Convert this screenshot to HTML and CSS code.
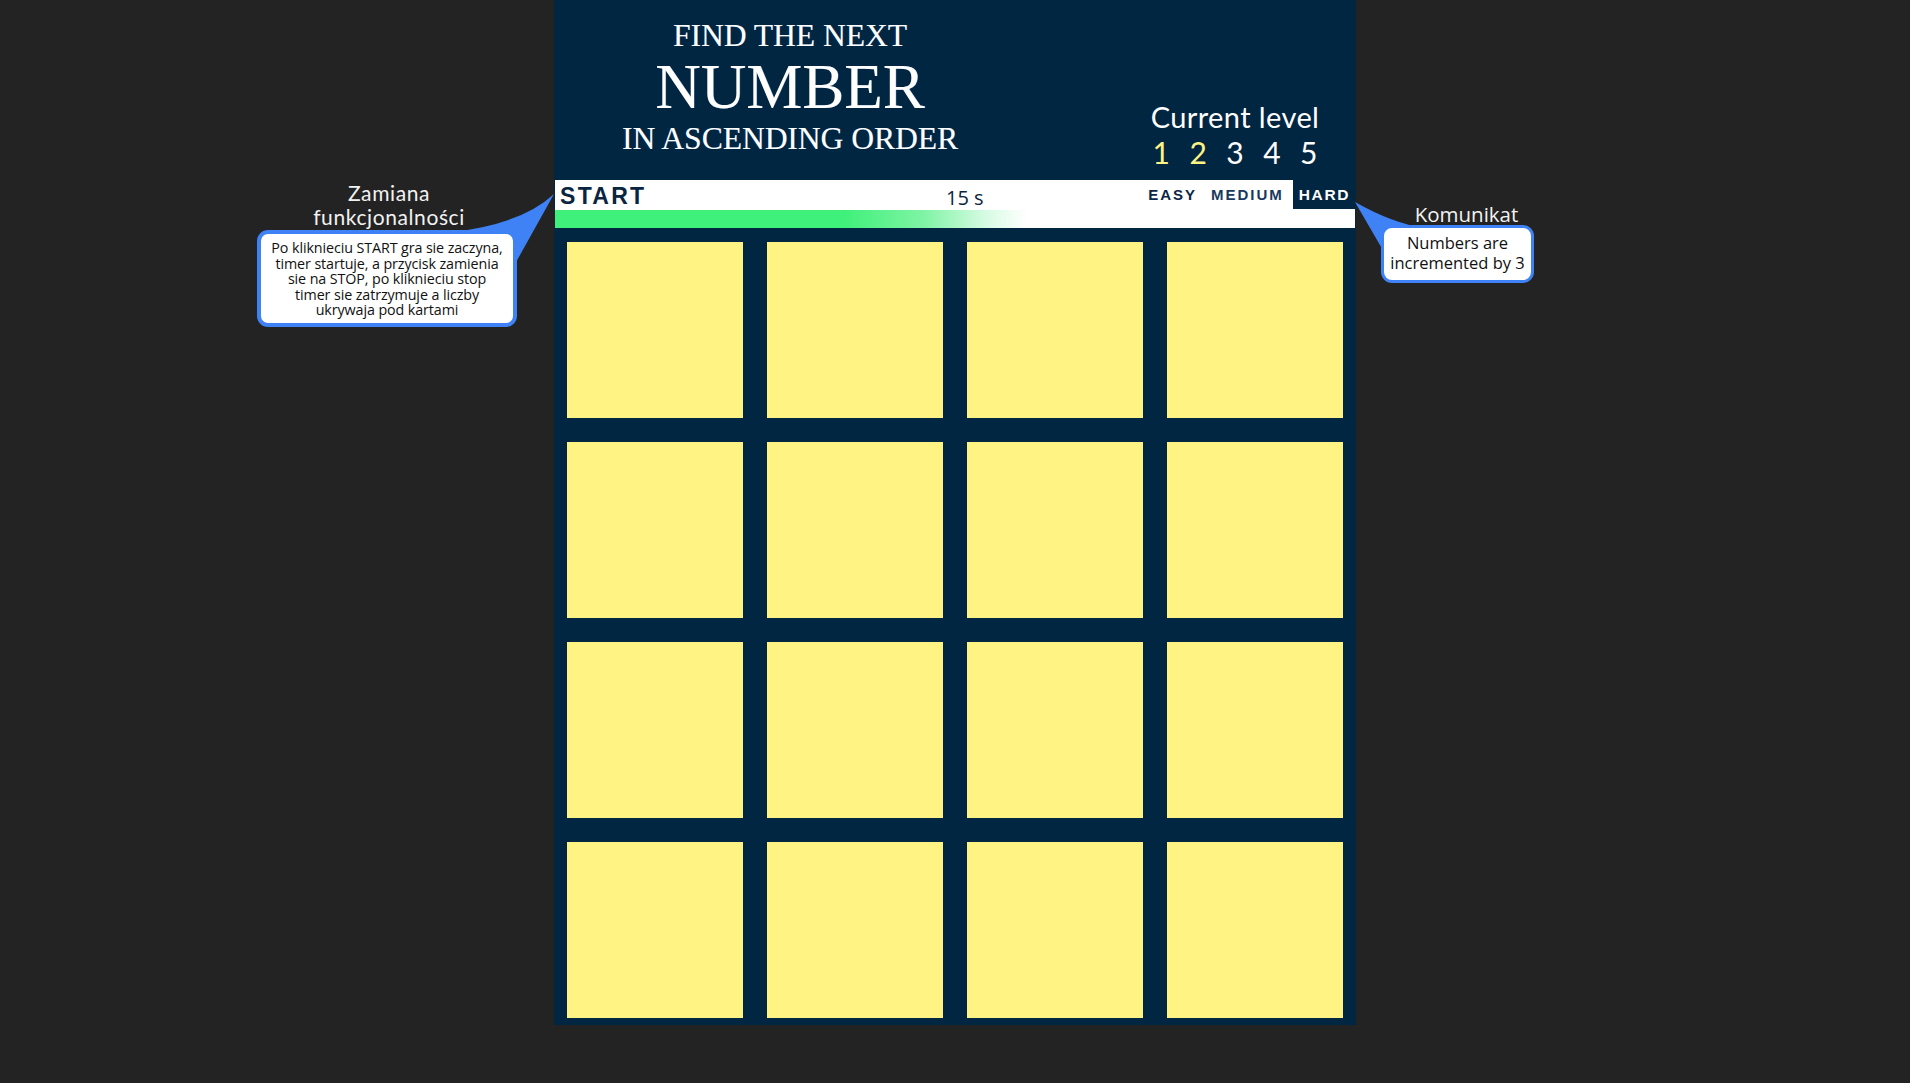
FILE: index.html
```html
<!DOCTYPE html>
<html lang="en">
<head>
<meta charset="utf-8">
<title>Find the next number</title>
<link rel="stylesheet" href="styles.css">
</head>
<body>
<div class="page">
  <main class="board">
    <header class="board-head">
      <div class="title">
        <div class="title-sm">FIND THE NEXT</div>
        <div class="title-lg">NUMBER</div>
        <div class="title-sm">IN ASCENDING ORDER</div>
      </div>
      <div class="level">
        <div class="level-label">Current level</div>
        <div class="level-nums">
          <span class="done">1</span><span class="done">2</span><span>3</span><span>4</span><span>5</span>
        </div>
      </div>
    </header>
    <section class="toolbar">
      <div class="toolbar-row">
        <div class="start">START</div>
        <div class="timer">15 s</div>
        <div class="difficulty">
          <span class="diff easy">EASY</span>
          <span class="diff medium">MEDIUM</span>
          <span class="diff active">HARD</span>
        </div>
      </div>
      <div class="progress"></div>
    </section>
    <section class="cards">
      <div class="card"></div><div class="card"></div><div class="card"></div><div class="card"></div>
      <div class="card"></div><div class="card"></div><div class="card"></div><div class="card"></div>
      <div class="card"></div><div class="card"></div><div class="card"></div><div class="card"></div>
      <div class="card"></div><div class="card"></div><div class="card"></div><div class="card"></div>
    </section>
  </main>

  <svg class="pointers" width="1910" height="1083" viewBox="0 0 1910 1083">
    <path d="M 452 232 Q 522 224 554 194 L 515 264 Z" fill="#3f82f6"/>
    <path d="M 1355 202 Q 1392 223 1424 228 L 1384 252 Z" fill="#3f82f6"/>
  </svg>

  <aside class="note note-left">
    <div class="note-title"><div>Zamiana</div><div>funkcjonalności</div></div>
    <div class="note-box">Po kliknieciu START gra sie zaczyna,<br>timer startuje, a przycisk zamienia<br>sie na STOP, po kliknieciu stop<br>timer sie zatrzymuje a liczby<br>ukrywaja pod kartami</div>
  </aside>

  <aside class="note note-right">
    <div class="note-title">Komunikat</div>
    <div class="note-box">Numbers are<br>incremented by 3</div>
  </aside>
</div>
</body>
</html>
```

FILE: styles.css
```css
html, body {
  margin: 0;
  padding: 0;
  background: #232323;
}

.page {
  position: relative;
  width: 1910px;
  height: 1083px;
  overflow: hidden;
}

.board {
  width: 802px;
  margin: 0 auto;
  background: #002642;
  padding-bottom: 7px;
}

.board-head {
  height: 180px;
  display: flex;
  justify-content: space-between;
  align-items: flex-start;
}

.title {
  width: 472px;
  padding-top: 20px;
  text-align: center;
  color: #ffffff;
  font-family: "Liberation Serif", "Times New Roman", serif;
  text-shadow: 0.5px 0 0 rgba(150, 190, 255, 0.5);
}

.title-sm {
  font-size: 31.5px;
  line-height: 1;
  margin-bottom: 4px;
}

.title-lg {
  font-size: 63px;
  line-height: 1;
  margin-bottom: 4px;
}

.level {
  width: 172px;
  margin-top: 100px;
  margin-right: 35px;
  text-align: center;
  color: #ffffff;
  font-family: Lato, "Open Sans", sans-serif;
}

.level-label {
  font-size: 29px;
  line-height: 34px;
  letter-spacing: 0.4px;
  white-space: nowrap;
}

.level-nums {
  margin-top: 1px;
  display: flex;
  justify-content: center;
  gap: 19.5px;
  font-size: 30px;
  line-height: 34px;
}

.level-nums .done {
  color: #fff383;
}

.toolbar {
  margin: 0 1px;
  height: 48px;
  background: #ffffff;
  display: flex;
  flex-direction: column;
}

.toolbar-row {
  height: 30px;
  display: grid;
  grid-template-columns: 391px 1fr auto;
  align-items: start;
}

.start {
  padding-left: 5px;
  padding-top: 1px;
  font-family: "Liberation Sans", Arial, sans-serif;
  font-weight: bold;
  font-size: 23px;
  line-height: 30px;
  letter-spacing: 2.3px;
  color: #0a2540;
}

.timer {
  padding-top: 3px;
  font-family: "Open Sans", "Noto Sans", sans-serif;
  font-size: 20px;
  line-height: 30px;
  color: #0b2440;
}

.difficulty {
  display: flex;
  align-items: flex-start;
  font-family: "Liberation Sans", Arial, sans-serif;
  font-weight: bold;
  font-size: 15px;
  line-height: 29px;
  letter-spacing: 2px;
}

.diff {
  height: 29px;
}

.easy {
  color: #0b2745;
  margin-right: 14px;
}

.medium {
  color: #183a60;
  margin-right: 9px;
}

.active {
  background: #002642;
  color: #ffffff;
  padding: 0 5px 0 6px;
  letter-spacing: 1.6px;
  font-size: 15.5px;
}

.progress {
  height: 18px;
  background: linear-gradient(to right, #3ff07a 0%, #3ff07a 36%, #7ef4a4 46%, #d8fbe4 54%, #ffffff 59%, #ffffff 100%);
}

.cards {
  margin-top: 14px;
  padding: 0 13px;
  display: grid;
  grid-template-columns: repeat(4, 176px);
  grid-auto-rows: 176px;
  gap: 24px;
}

.card {
  background: #fff383;
}

.pointers {
  position: absolute;
  left: 0;
  top: 0;
  pointer-events: none;
}

.note {
  position: absolute;
  font-family: "Open Sans", "Noto Sans", sans-serif;
  text-align: center;
}

.note-title {
  color: #f2f2f2;
  font-size: 20.5px;
  line-height: 22px;
}

.note-box {
  position: relative;
  background: #ffffff;
  border: 4px solid #3f82f6;
  border-radius: 11px;
  color: #111111;
  box-sizing: border-box;
}

.note-left {
  left: 257px;
  top: 181px;
  width: 260px;
}

.note-left .note-title {
  margin-left: 4px;
  height: 49px;
  font-family: Lato, "Open Sans", sans-serif;
  font-size: 21px;
  letter-spacing: 0.6px;
  line-height: 24px;
}

.note-left .note-box {
  height: 97px;
  padding-top: 6px;
  font-size: 14.3px;
  line-height: 15.6px;
  letter-spacing: -0.1px;
}

.note-right {
  left: 1381px;
  top: 203px;
  width: 153px;
}

.note-right .note-title {
  margin-left: 18px;
  height: 22px;
}

.note-right .note-box {
  height: 58px;
  padding-top: 5px;
  font-size: 16.5px;
  line-height: 20px;
  border-width: 3px;
}
```
